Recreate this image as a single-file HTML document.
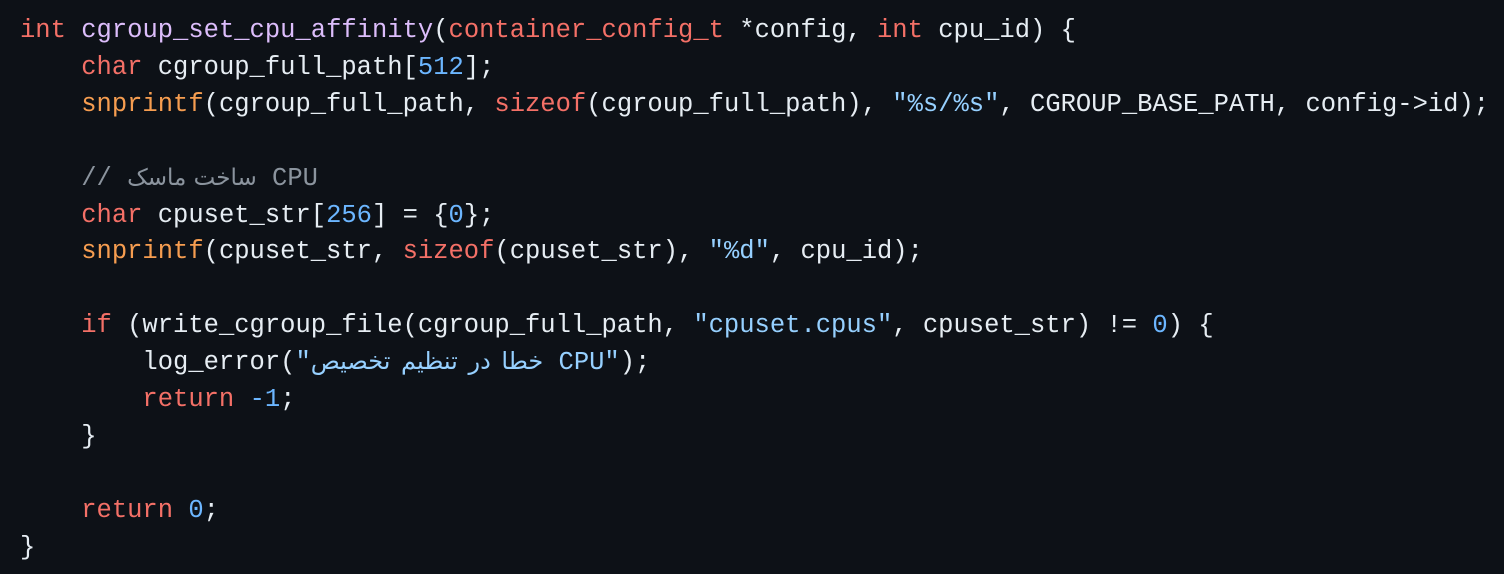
<!DOCTYPE html>
<html><head><meta charset="utf-8">
<style>
html,body{margin:0;padding:0;background:#0d1117;width:1504px;height:574px;overflow:hidden}
pre{margin:0;padding:13px 0 0 20px;font-family:"Liberation Mono","DejaVu Sans Mono","DejaVu Sans",monospace;font-size:25.5px;line-height:36.9px;color:#e6edf3;white-space:pre}
.k{color:#f47067}.f{color:#dcbdfb}.o{color:#f69d50}.s{color:#96d0ff}.n{color:#6cb6ff}.c{color:#8b949e}
.a{font-family:"DejaVu Sans",sans-serif;font-size:23px;line-height:0}
.b{font-family:"DejaVu Sans",sans-serif;font-size:24px;word-spacing:3px;line-height:0}
</style></head><body>
<pre><span class="k">int</span> <span class="f">cgroup_set_cpu_affinity</span>(<span class="k">container_config_t</span> *config, <span class="k">int</span> cpu_id) {
    <span class="k">char</span> cgroup_full_path[<span class="n">512</span>];
    <span class="o">snprintf</span>(cgroup_full_path, <span class="k">sizeof</span>(cgroup_full_path), <span class="s">"%s/%s"</span>, CGROUP_BASE_PATH, config-&gt;id);

    <span class="c">// <span class="a">ساخت ماسک</span> CPU</span>
    <span class="k">char</span> cpuset_str[<span class="n">256</span>] = {<span class="n">0</span>};
    <span class="o">snprintf</span>(cpuset_str, <span class="k">sizeof</span>(cpuset_str), <span class="s">"%d"</span>, cpu_id);

    <span class="k">if</span> (write_cgroup_file(cgroup_full_path, <span class="s">"cpuset.cpus"</span>, cpuset_str) != <span class="n">0</span>) {
        log_error(<span class="s">"<span class="b">خطا در تنظیم تخصیص</span> CPU"</span>);
        <span class="k">return</span> <span class="n">-1</span>;
    }

    <span class="k">return</span> <span class="n">0</span>;
}</pre>
</body></html>
